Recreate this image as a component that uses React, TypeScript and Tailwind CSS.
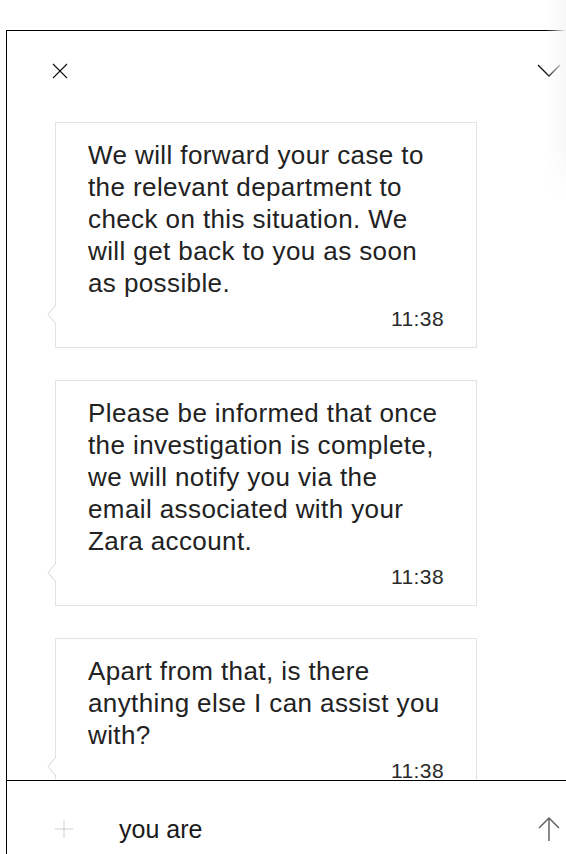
import React from 'react';

const messages = [
  {
    lines: [
      'We will forward your case to',
      'the relevant department to',
      'check on this situation. We',
      'will get back to you as soon',
      'as possible.',
    ],
    time: '11:38',
  },
  {
    lines: [
      'Please be informed that once',
      'the investigation is complete,',
      'we will notify you via the',
      'email associated with your',
      'Zara account.',
    ],
    time: '11:38',
  },
  {
    lines: ['Apart from that, is there', 'anything else I can assist you', 'with?'],
    time: '11:38',
  },
];

const Bubble = ({ lines, time }: { lines: string[]; time: string }) => (
  <div className="relative w-[422px] shrink-0 border border-[#e3e3e3] bg-white pl-[32px] pr-[32px] pt-[16px] pb-[16px]">
    <div className="text-[26px] leading-[32px] tracking-[0.4px] text-[#222]">
      {lines.map((l, i) => (
        <div key={i} className="whitespace-nowrap">
          {l}
        </div>
      ))}
    </div>
    <div className="mt-[8px] text-right text-[21px] leading-[24px] tracking-[0.4px] text-[#2a2a2a]">{time}</div>
    {/* tail */}
    <svg
      className="absolute left-[-9px] bottom-[22px]"
      width="10"
      height="20"
      viewBox="0 0 10 20"
    >
      <polygon points="9,0 1,9.5 9,19 10,19 10,0" fill="white" />
      <polyline points="9,0 1,9.5 9,19" fill="none" stroke="#d6d6d6" strokeWidth="1" />
    </svg>
  </div>
);

export default function App() {
  return (
    <div
      className="relative h-[854px] w-[566px] overflow-hidden bg-white"
      style={{ fontFamily: '"Liberation Sans", Arial, sans-serif' }}
    >
      <div className="pointer-events-none absolute right-0 top-0 h-[200px] w-[20px] bg-gradient-to-r from-transparent to-[#f7f7f7] [mask-image:linear-gradient(to_bottom,black_70%,transparent)]" />
      <div className="ml-[6px] mt-[30px] flex h-[846px] flex-col border-l border-t border-black">
        {/* header */}
        <div className="flex h-[80px] shrink-0 items-start justify-between pt-[32px]">
          <svg className="ml-[45px]" width="16" height="16" viewBox="0 0 16 16">
            <path d="M1 1 L15 15 M15 1 L1 15" stroke="#111" strokeWidth="1.1" fill="none" />
          </svg>
          <svg className="mr-[5px] mt-[1px]" width="24" height="14" viewBox="0 0 24 14">
            <path d="M1 1 L12 12 L23 1" stroke="#111" strokeWidth="1.3" fill="none" />
          </svg>
        </div>
        {/* messages */}
        <div className="flex h-[669px] shrink-0 flex-col gap-[32px] overflow-hidden pl-[48px] pt-[11px]">
          {messages.map((m, i) => (
            <Bubble key={i} lines={m.lines} time={m.time} />
          ))}
        </div>
        {/* input */}
        <div className="flex h-[96px] shrink-0 items-center border-t border-black">
          <svg className="ml-[48px]" width="18" height="18" viewBox="0 0 18 18">
            <path d="M9 0 V18 M0 9 H18" stroke="#d0d0d0" strokeWidth="1" fill="none" />
          </svg>
          <div className="ml-[46px] flex-1 text-[25px] leading-[32px] text-[#1a1a1a]">you are</div>
          <svg className="mr-[6px]" width="22" height="24" viewBox="0 0 22 24">
            <path d="M11 1 V24 M1 11 L11 1 L21 11" stroke="#666" strokeWidth="1.5" fill="none" />
          </svg>
        </div>
      </div>
    </div>
  );
}
